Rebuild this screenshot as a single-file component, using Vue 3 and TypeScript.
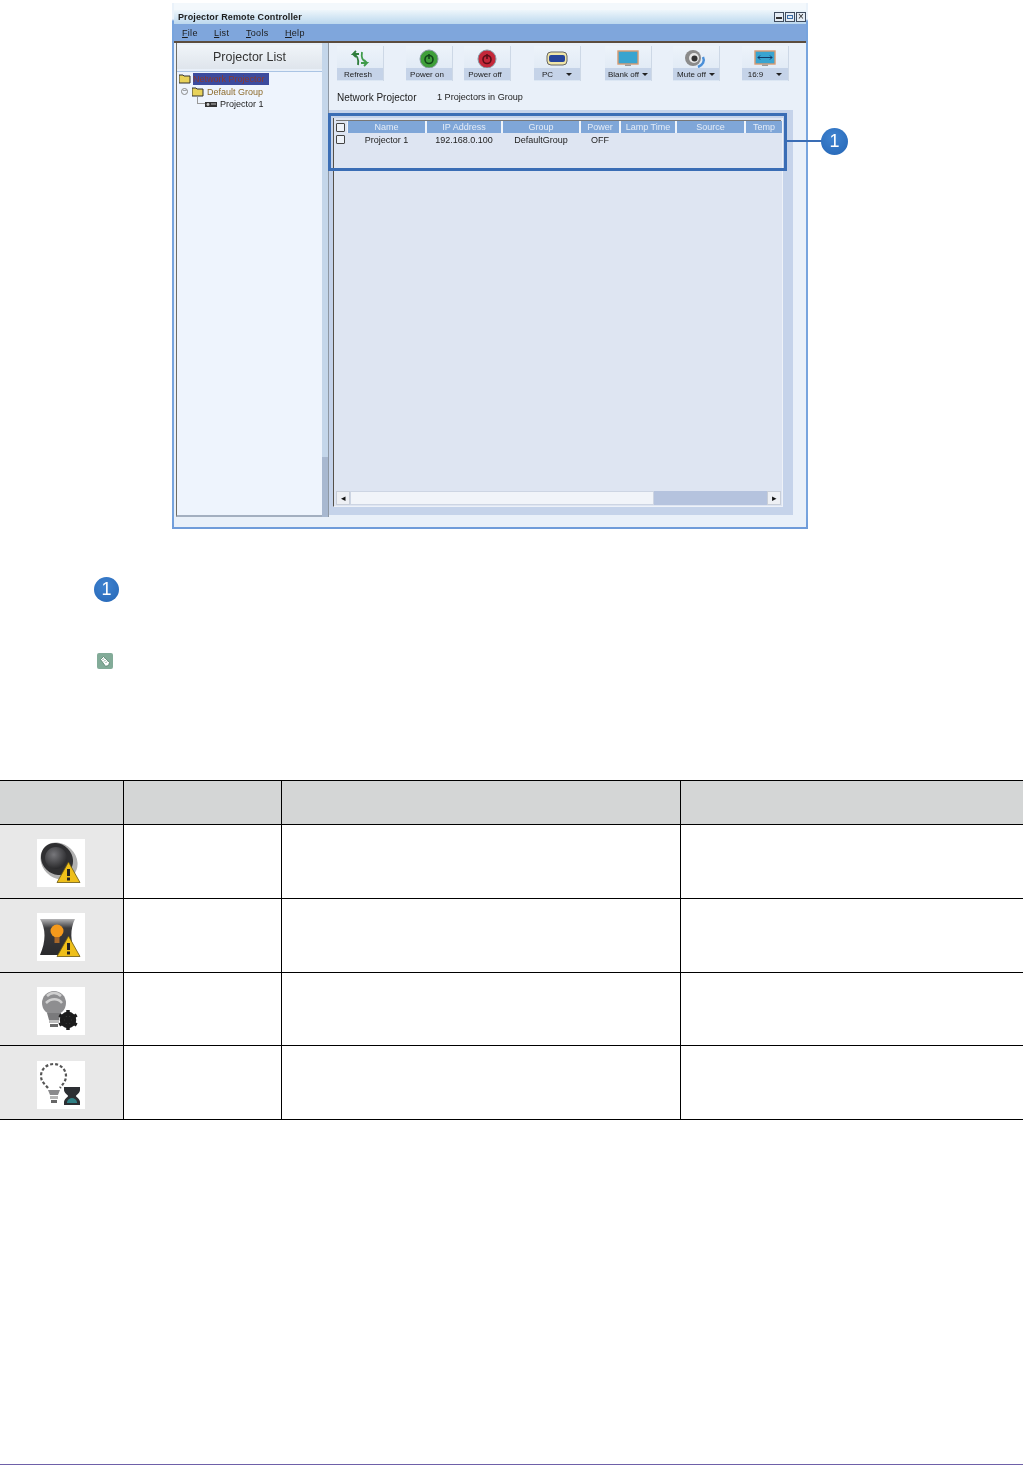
<template>
  <div class="page">
    <div class="shot-row">
      <div class="shot">
        <div class="win">
          <div class="titlebar">
            <span class="title">Projector Remote Controller</span>
            <div class="win-btns">
              <span class="win-btn"><i class="b-min"></i></span>
              <span class="win-btn"><i class="b-max"></i></span>
              <span class="win-btn b-x">×</span>
            </div>
          </div>
          <div class="menubar">
            <span v-for="m in menus" :key="m.text" class="menu" :style="{ width: m.width + 'px' }"><u>{{ m.text[0] }}</u>{{ m.text.slice(1) }}</span>
          </div>
          <div class="body">
            <div class="side">
              <div class="side-head">Projector List</div>
              <div class="tree">
                <div class="node n0">
                  <svg class="folder" viewBox="0 0 12 10"><path d="M0 1h4l1 1h6v7H0z" fill="#e8d25a" stroke="#333" stroke-width="1" /></svg>
                  <span class="sel">Network Projector</span>
                </div>
                <div class="node n1">
                  <span class="exp">−</span>
                  <svg class="folder" viewBox="0 0 12 10"><path d="M0 1h4l1 1h6v7H0z" fill="#e8d25a" stroke="#333" stroke-width="1" /></svg>
                  <span class="grp">Default Group</span>
                </div>
                <div class="node n2">
                  <span class="elbow"></span>
                  <svg class="proj" viewBox="0 0 12 7"><rect x="0" y="1" width="12" height="5" fill="#333" /><circle cx="3" cy="3.5" r="1.4" fill="#ccc" /><rect x="6" y="2.5" width="5" height="1" fill="#bbb" /></svg>
                  <span>Projector 1</span>
                </div>
              </div>
            </div>
            <div class="splitter"><div class="split-thumb"></div></div>
            <div class="main">
              <div class="toolbar">
                <div v-for="b in tools" :key="b.label" class="tool" :style="{ marginLeft: b.gap + 'px' }">
                  <div class="tool-icon">
                    <svg v-if="b.icon === 'refresh'" width="20" height="18" viewBox="0 0 20 18">
                      <path d="M9 4H3l3-3M3 4l3 3M3 4c4 1 6 4 5 11" fill="none" stroke="#2f7d3c" stroke-width="1.800" />
                      <path d="M11 13h6l-3 3M17 13l-3-3M16 12c-3-1-5-4-4-10" fill="none" stroke="#3f9b4a" stroke-width="1.800" />
                    </svg>
                    <svg v-else-if="b.icon === 'on' || b.icon === 'off'" width="20" height="20" viewBox="0 0 20 20">
                      <circle cx="10" cy="10" r="9" :fill="b.icon === 'on' ? '#3f9f3a' : '#c4283a'" stroke="#8a9aa5" stroke-width="1" />
                      <circle cx="10" cy="10.5" r="4" fill="none" :stroke="b.icon === 'on' ? '#12451a' : '#5a0f18'" stroke-width="1.600" />
                      <path d="M10 5v5" :stroke="b.icon === 'on' ? '#12451a' : '#5a0f18'" stroke-width="1.600" />
                    </svg>
                    <svg v-else-if="b.icon === 'pc'" width="22" height="15" viewBox="0 0 22 15">
                      <rect x="1" y="1" width="20" height="13" rx="4" fill="#f0e6a8" stroke="#666" stroke-width="1" />
                      <rect x="3" y="4" width="16" height="7" rx="2" fill="#26449a" />
                    </svg>
                    <svg v-else-if="b.icon === 'blank' || b.icon === 'wide'" width="22" height="17" viewBox="0 0 22 17">
                      <rect x="1" y="1" width="20" height="13" fill="#39a4d0" stroke="#d89a70" stroke-width="1.400" />
                      <rect x="8" y="14.500" width="6" height="1.500" fill="#999" />
                      <path v-if="b.icon === 'wide'" d="M4 7.500h14M4 7.500l2-2M4 7.500l2 2M18 7.500l-2-2M18 7.500l-2 2" fill="none" stroke="#143a66" stroke-width="1" />
                    </svg>
                    <svg v-else width="26" height="20" viewBox="0 0 26 20">
                      <circle cx="10" cy="9" r="8" fill="#8b8b8b" />
                      <circle cx="11" cy="9" r="5" fill="#e6e6e6" />
                      <circle cx="11.500" cy="9.500" r="3" fill="#333" />
                      <path d="M20 8c2 4 0 8-5 10" fill="none" stroke="#4a8fd8" stroke-width="2.500" />
                    </svg>
                  </div>
                  <div class="tool-label" :class="{ wide: b.caret && b.label.length < 5, plain: !b.caret }">
                    <span>{{ b.label }}</span>
                    <i v-if="b.caret" class="caret"></i>
                  </div>
                </div>
              </div>
              <div class="status">
                <span class="status-a">Network Projector</span>
                <span class="status-b">1 Projectors in Group</span>
              </div>
              <div class="panel">
                <div class="listview">
                  <div class="lv-head">
                    <span class="chk-cell"><i class="chk"></i></span>
                    <span v-for="c in columns" :key="c.name" class="col" :style="{ width: c.width + 'px' }">{{ c.name }}</span>
                  </div>
                  <div class="lv-row">
                    <span class="chk-cell"><i class="chk"></i></span>
                    <span v-for="c in columns" :key="c.name" class="cell" :style="{ width: c.width + 'px' }">{{ c.value }}</span>
                  </div>
                  <div class="hscroll">
                    <span class="sb-btn">◂</span>
                    <div class="sb-thumb"></div>
                    <div class="sb-track"></div>
                    <span class="sb-btn">▸</span>
                  </div>
                </div>
              </div>
            </div>
          </div>
        </div>
      </div>
      <div class="callout-box"></div>
      <div class="callout-line"></div>
      <span class="num num-callout">1</span>
    </div>

    <div class="legend">
      <span class="num">1</span>
      <div class="note">
        <svg width="16" height="16" viewBox="0 0 16 16">
          <path d="M3.500 6.500 6.500 3.500l6 6-1 3-3 .8z" fill="#fff" stroke="#55806c" stroke-width=".8" />
          <path d="M5.500 7 7 5.500M7 8.500 8.500 7M8.500 10 10 8.500" stroke="#55806c" stroke-width=".8" />
        </svg>
      </div>
    </div>

    <table class="status-table">
      <colgroup>
        <col class="c1" />
        <col class="c2" />
        <col class="c3" />
        <col class="c4" />
      </colgroup>
      <thead>
        <tr><th></th><th></th><th></th><th></th></tr>
      </thead>
      <tbody>
        <tr v-for="row in iconRows" :key="row.icon" :style="{ height: row.height + 'px' }">
          <td class="icon-cell" :style="{ paddingTop: row.pad + 'px' }">
            <div class="icon-box">
              <svg v-if="row.icon === 'speaker'" width="48" height="48" viewBox="0 0 48 48">
                <defs>
                  <radialGradient id="cone" cx="40%" cy="35%" r="65%">
                    <stop offset="0" stop-color="#77777b" />
                    <stop offset="1" stop-color="#2a2a2c" />
                  </radialGradient>
                </defs>
                <ellipse cx="22" cy="22" rx="20" ry="17" transform="rotate(45 22 22)" fill="#b0b0b0" />
                <ellipse cx="20" cy="20" rx="17" ry="15" transform="rotate(45 20 20)" fill="#2f2f31" />
                <circle cx="19" cy="19" r="11" fill="url(#cone)" />
                <path d="M31.500 23 43 43.500H20z" fill="#eebf1a" stroke="#6a5812" stroke-width=".8" />
                <rect x="30" y="30" width="3" height="7" fill="#222" />
                <rect x="30" y="38.500" width="3" height="3" fill="#222" />
              </svg>
              <svg v-else-if="row.icon === 'lamp'" width="48" height="48" viewBox="0 0 48 48">
                <defs>
                  <linearGradient id="shade" x1="0" y1="0" x2="0" y2="1">
                    <stop offset="0" stop-color="#b5b5b7" />
                    <stop offset=".25" stop-color="#3c3c3e" />
                    <stop offset="1" stop-color="#2a2a2c" />
                  </linearGradient>
                </defs>
                <path d="M3 6h35c-5 10-5 22 1 36H3c6-14 6-26 0-36z" fill="url(#shade)" />
                <circle cx="20" cy="18" r="6.500" fill="#f59a1c" />
                <rect x="17.500" y="24" width="5" height="6" fill="#a8682a" />
                <path d="M31.500 23 43 43.500H20z" fill="#eebf1a" stroke="#6a5812" stroke-width=".8" />
                <rect x="30" y="30" width="3" height="7" fill="#222" />
                <rect x="30" y="38.500" width="3" height="3" fill="#222" />
              </svg>
              <svg v-else-if="row.icon === 'gear'" width="48" height="48" viewBox="0 0 48 48">
                <circle cx="17" cy="16" r="12" fill="#8e8e90" />
                <path d="M10 9c4-4 10-4 14 0M9 16c5-5 12-5 16 0" fill="none" stroke="#d0d0d0" stroke-width="2.500" />
                <path d="M10 26h14l-2 7H12z" fill="#7a7a7c" />
                <rect x="12" y="33" width="10" height="3" fill="#bdbdbd" />
                <rect x="13" y="37" width="8" height="3" fill="#6a6a6a" />
                <circle cx="31" cy="33" r="6" fill="none" stroke="#1c1c1c" stroke-width="4.500" />
                <path d="M31 23v20M22.300 28 39.700 38M22.300 38 39.700 28" stroke="#1c1c1c" stroke-width="3.500" />
              </svg>
              <svg v-else width="48" height="48" viewBox="0 0 48 48">
                <path d="M11 27C8 23 4 21 4 15 4 8 10 3 16.500 3S29 8 29 15c0 5-3 8-6 12" fill="#fff" stroke="#555" stroke-width="2.200" stroke-dasharray="3 2" />
                <path d="M11 29h12l-2 5H13z" fill="#8a8a8c" />
                <rect x="13" y="35" width="8" height="3" fill="#b5b5b5" />
                <rect x="14" y="39" width="6" height="3" fill="#666" />
                <path d="M27 26h16v3c0 3-4 5-4 6s4 3 4 6v3H27v-3c0-3 4-5 4-6s-4-3-4-6z" fill="#2c2f33" />
                <path d="M30 41c1-3 3-4 5-4s4 1 5 4v1H30z" fill="#2f7f84" />
              </svg>
            </div>
          </td>
          <td></td>
          <td></td>
          <td></td>
        </tr>
      </tbody>
    </table>

    <div class="footer-line"></div>
  </div>
</template>

<script setup lang="ts">
interface ToolButton {
  label: string
  icon: string
  gap: number
  caret?: boolean
}

interface Column {
  name: string
  width: number
  value: string
}

const menus = [
  { text: 'File', width: 32 },
  { text: 'List', width: 32 },
  { text: 'Tools', width: 39 },
  { text: 'Help', width: 30 },
]

const tools: ToolButton[] = [
  { label: 'Refresh', icon: 'refresh', gap: 0 },
  { label: 'Power on', icon: 'on', gap: 22 },
  { label: 'Power off', icon: 'off', gap: 11 },
  { label: 'PC', icon: 'pc', gap: 23, caret: true },
  { label: 'Blank off', icon: 'blank', gap: 24, caret: true },
  { label: 'Mute off', icon: 'mute', gap: 21, caret: true },
  { label: '16:9', icon: 'wide', gap: 22, caret: true },
]

const columns: Column[] = [
  { name: 'Name', width: 79, value: 'Projector 1' },
  { name: 'IP Address', width: 76, value: '192.168.0.100' },
  { name: 'Group', width: 78, value: 'DefaultGroup' },
  { name: 'Power', width: 40, value: 'OFF' },
  { name: 'Lamp Time', width: 56, value: '' },
  { name: 'Source', width: 69, value: '' },
  { name: 'Temp', width: 38, value: '' },
]

const iconRows = [
  { icon: 'speaker', height: 74, pad: 14 },
  { icon: 'lamp', height: 74, pad: 14 },
  { icon: 'gear', height: 73, pad: 14 },
  { icon: 'hourglass', height: 74, pad: 15 },
]
</script>

<style>
html,
body {
  margin: 0;
  background: #fff;
}
</style>

<style scoped>
.page {
  width: 1023px;
  height: 1465px;
  overflow: hidden;
  display: flex;
  flex-direction: column;
  font-family: "Liberation Sans", Arial, sans-serif;
  background: #fff;
}

.shot-row {
  position: relative;
  height: 529px;
  padding-left: 172px;
  flex: none;
}

.shot {
  width: 636px;
  height: 529px;
  box-sizing: border-box;
  padding-top: 3px;
  background: #fff;
}

.win {
  height: 100%;
  box-sizing: border-box;
  padding-top: 7px;
  border-style: solid;
  border-width: 0 2px 2px;
  border-image: linear-gradient(#eaf2fa, #eaf2fa 18px, #77a4de 20px, #77a4de 510px, #6f9bd9) 2;
  background: linear-gradient(#f3f8fc, #f3f8fc 7px, #e8f0f8 8px);
  display: flex;
  flex-direction: column;
  filter: blur(0.55px);
  color: #1c1c1c;
}

.titlebar {
  height: 14px;
  display: flex;
  align-items: center;
  justify-content: space-between;
  padding-left: 4px;
  background: linear-gradient(#eef6fb, #bcd8ee);
}

.title {
  font-size: 9px;
  font-weight: 700;
  letter-spacing: 0.12px;
}

.win-btns {
  display: flex;
  gap: 1px;
}

.win-btn {
  width: 10px;
  height: 10px;
  box-sizing: border-box;
  border: 1px solid #3f4c5e;
  background: #e4ecf4;
  display: flex;
  align-items: center;
  justify-content: center;
  font-size: 10px;
  line-height: 1;
}

.b-min {
  width: 6px;
  height: 2px;
  background: #333;
  margin-top: 2px;
}

.b-max {
  width: 6px;
  height: 4px;
  border: 1px solid #3a6ea8;
  box-sizing: border-box;
}

.menubar {
  height: 17px;
  padding-left: 8px;
  display: flex;
  align-items: center;
  background: #7fa6dc;
  font-size: 9px;
}

.menu {
  display: inline-block;
  letter-spacing: 0.3px;
}

.body {
  flex: 1;
  display: flex;
  min-height: 0;
  border-top: 2px solid #5b4c3e;
  background: #e9f0f9;
}

.side {
  width: 145px;
  margin-left: 2px;
  display: flex;
  flex-direction: column;
  border-left: 1px solid #6d6d66;
  border-bottom: 2px solid #a3afc0;
  margin-bottom: 10px;
}

.side-head {
  height: 24px;
  margin-top: 2px;
  display: flex;
  align-items: center;
  justify-content: center;
  background: linear-gradient(#f0f4f9, #dfe5ec);
  font-size: 12.500px;
  color: #333;
}

.tree {
  flex: 1;
  margin-top: 2px;
  padding-top: 1px;
  background: #eef4fd;
  border-top: 1px solid #aac4e4;
  font-size: 9px;
}

.node {
  height: 12.500px;
  display: flex;
  align-items: center;
  white-space: nowrap;
}

.n0 {
  padding-left: 2px;
}

.n1 {
  padding-left: 4px;
}

.n2 {
  padding-left: 20px;
}

.folder {
  width: 12px;
  height: 10px;
  flex: none;
}

.sel {
  margin-left: 2px;
  width: 76px;
  height: 12px;
  line-height: 12px;
  background: #3c4b9e;
  color: #8a3a30;
  overflow: hidden;
  font-size: 9px;
}

.exp {
  width: 7px;
  height: 7px;
  box-sizing: border-box;
  border: 1px solid #888;
  border-radius: 50%;
  font-size: 7px;
  line-height: 4px;
  text-align: center;
  margin-right: 4px;
  color: #555;
}

.grp {
  margin-left: 3px;
  color: #8d6b2c;
}

.elbow {
  width: 8px;
  height: 7px;
  margin-top: -7px;
  box-sizing: border-box;
  border-left: 1px solid #999;
  border-bottom: 1px solid #999;
}

.proj {
  width: 12px;
  height: 7px;
  margin: 0 3px 0 0;
}

.splitter {
  width: 7px;
  background: #c4d6ea;
  margin-bottom: 10px;
  border-right: 1px solid #8d97a3;
  box-sizing: border-box;
  position: relative;
  display: flex;
  flex-direction: column;
  justify-content: flex-end;
}

.split-thumb {
  height: 60px;
  background: #a8b8d0;
}

.main {
  flex: 1;
  min-width: 0;
  display: flex;
  flex-direction: column;
}

.toolbar {
  height: 35px;
  margin-top: 3px;
  padding-left: 8px;
  display: flex;
}

.tool {
  width: 47px;
  flex: none;
  display: flex;
  flex-direction: column;
  background: linear-gradient(#edf3fa, #dbe6f3);
  border-right: 1px solid #cdd8e6;
  box-sizing: border-box;
}

.tool-icon {
  height: 23px;
  box-sizing: border-box;
  padding-top: 2px;
  display: flex;
  align-items: center;
  justify-content: center;
}

.tool-label {
  height: 12px;
  background: #c5d3e8;
  display: flex;
  align-items: center;
  justify-content: center;
  gap: 3px;
  font-size: 8px;
  white-space: nowrap;
  margin-top: -1px;
}

.tool-label.plain {
  padding-right: 4px;
}

.tool-label.wide {
  gap: 13px;
}

.caret {
  width: 0;
  height: 0;
  border-left: 3px solid transparent;
  border-right: 3px solid transparent;
  border-top: 3px solid #222;
}

.status {
  height: 29px;
  box-sizing: border-box;
  padding: 3px 0 0 8px;
  display: flex;
  align-items: center;
  white-space: nowrap;
}

.status-a {
  width: 100px;
  font-size: 10px;
}

.status-b {
  font-size: 9.100px;
}

.panel {
  width: 464px;
  height: 405px;
  box-sizing: border-box;
  padding: 8px 10px 8px 4px;
  background: #c5d3ea;
}

.listview {
  height: 100%;
  display: flex;
  flex-direction: column;
  box-sizing: border-box;
  padding: 2px 1px 1px 2px;
  background: #dee5f2;
  border-left: 1px solid #555048;
  border-right: 1px solid #eef2f8;
  border-bottom: 1px solid #eef2f8;
}

.lv-head {
  height: 12px;
  display: flex;
  align-items: stretch;
  border-top: 1px solid #777;
}

.chk-cell {
  width: 11px;
  flex: none;
  display: flex;
  align-items: center;
}

.chk {
  width: 9px;
  height: 9px;
  box-sizing: border-box;
  border: 1px solid #444;
  background: #eef2f8;
  border-radius: 1px;
}

.col {
  flex: none;
  box-sizing: border-box;
  text-align: center;
  font-size: 9px;
  line-height: 12px;
  color: #e4ecf7;
  background: #7fa6d8;
  border-left: 1px solid #f0f4fa;
  border-right: 1px solid #f0f4fa;
  white-space: nowrap;
}

.lv-row {
  height: 13px;
  display: flex;
  align-items: center;
}

.cell {
  flex: none;
  text-align: center;
  font-size: 9px;
  white-space: nowrap;
  color: #222;
}

.hscroll {
  margin-top: auto;
  height: 14px;
  display: flex;
}

.sb-btn {
  width: 14px;
  flex: none;
  background: #eef0f4;
  border: 1px solid #c8ced8;
  box-sizing: border-box;
  display: flex;
  align-items: center;
  justify-content: center;
  font-size: 9px;
  color: #111;
}

.sb-thumb {
  width: 304px;
  background: #f1f4f9;
  border: 1px solid #cdd5e3;
  box-sizing: border-box;
}

.sb-track {
  flex: 1;
  background: #b5c3de;
}

/* highlight drawn over the screenshot */
.callout-box {
  position: absolute;
  left: 328px;
  top: 113px;
  width: 459px;
  height: 58px;
  box-sizing: border-box;
  border: 3px solid #3a6db5;
}

.callout-line {
  position: absolute;
  left: 787px;
  top: 140px;
  width: 36px;
  height: 2px;
  background: #3a6db5;
}

.num {
  width: 25px;
  height: 25px;
  border-radius: 50%;
  background: radial-gradient(circle at 45% 35%, #3f83d0, #2465b5);
  color: #fff;
  font-size: 18px;
  line-height: 25px;
  text-align: center;
  display: block;
  filter: blur(0.3px);
}

.num-callout {
  position: absolute;
  left: 821px;
  top: 128px;
  width: 27px;
  height: 27px;
  line-height: 27px;
}

.legend {
  flex: none;
  height: 251px;
  box-sizing: border-box;
  padding: 48px 0 0 94px;
  display: flex;
  flex-direction: column;
  gap: 51px;
}

.note {
  width: 16px;
  height: 16px;
  margin-left: 3px;
  border-radius: 2px;
  background: #82ab98;
  display: flex;
  align-items: center;
  justify-content: center;
}

.status-table {
  flex: none;
  width: 1024px;
  table-layout: fixed;
  border-collapse: collapse;
  border-top: 1px solid #000;
  border-bottom: 1px solid #000;
}

.c1 {
  width: 123.500px;
}

.c2 {
  width: 158px;
}

.c3 {
  width: 399px;
}

.status-table th {
  height: 43px;
  background: #d4d6d6;
  padding: 0;
}

.status-table td {
  padding: 0;
  background: #fff;
}

.status-table th,
.status-table td {
  border: 1px solid #000;
  border-left: none;
}

.status-table th:last-child,
.status-table td:last-child {
  border-right: none;
}

.status-table .icon-cell {
  background: #e8e8e8;
  vertical-align: top;
}

.icon-box {
  width: 48px;
  height: 48px;
  margin-left: 37px;
  background: #fff;
}

.icon-box svg {
  display: block;
  filter: blur(0.6px);
}

.footer-line {
  margin-top: auto;
  height: 1px;
  background: #6e60a8;
}
</style>
